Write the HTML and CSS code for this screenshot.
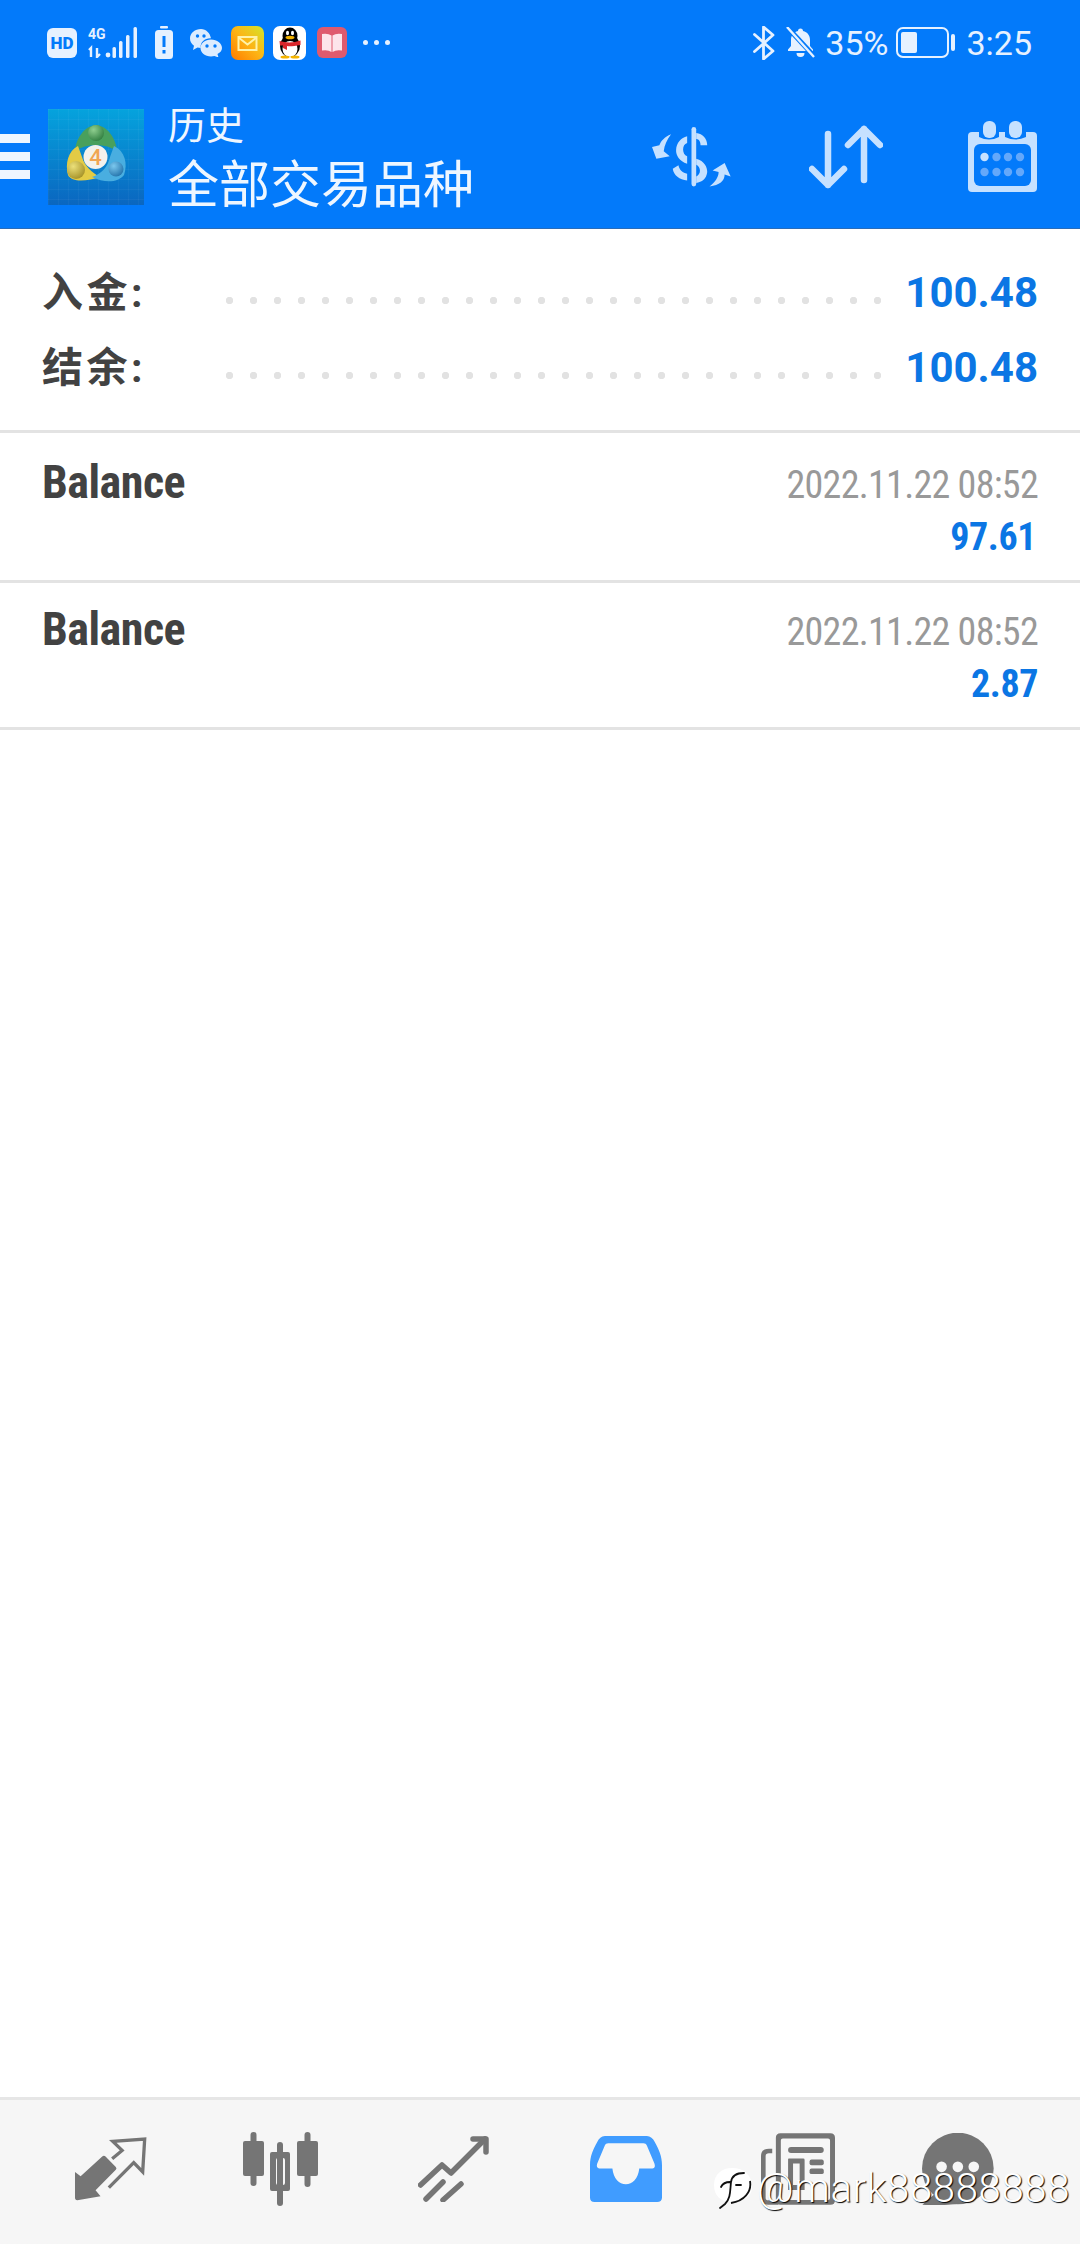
FILE: index.html
```html
<!DOCTYPE html>
<html lang="zh">
<head>
<meta charset="utf-8">
<title>历史</title>
<link rel="stylesheet" href="styles.css">
</head>
<body>
<div class="page">
  <header class="header">
    <div class="status">
      <div class="status-left">
        <span class="hd">HD</span>
        <svg class="st-signal" width="50" height="31" viewBox="0 0 50 31">
          <text x="0" y="12" class="sig-text">4G</text>
          <path d="M3 30V21L1 23M9 21V30L12 27M9 30" fill="none" stroke="#e6f1ff" stroke-width="2.4"/>
          <circle cx="20" cy="28" r="2.4" fill="#e6f1ff"/>
          <rect x="24.500" y="20" width="3.500" height="11" rx="1.500" fill="#e6f1ff"/>
          <rect x="31" y="14" width="3.500" height="17" rx="1.500" fill="#e6f1ff"/>
          <rect x="38" y="8" width="3.500" height="23" rx="1.500" fill="#e6f1ff"/>
          <rect x="45.500" y="0" width="3.500" height="31" rx="1.500" fill="#e6f1ff"/>
        </svg>
        <svg class="st-batt" width="18" height="33" viewBox="0 0 18 33">
          <rect x="5" y="0" width="8" height="2.500" rx="1" fill="#e6f1ff"/>
          <rect x="0" y="4" width="18" height="29" rx="3.500" fill="#e6f1ff"/>
          <rect x="7.500" y="10" width="3" height="11" fill="#037afa"/>
          <rect x="7.500" y="24" width="3" height="3.500" fill="#037afa"/>
        </svg>
        <svg class="st-wechat" width="32" height="28" viewBox="0 0 32 28">
          <path d="M11 0C5 0 0 4 0 9.500c0 3 1.500 5.500 4 7.200L3 21l4.500-2.500c1.200.3 2 .4 3.200.4C10 13 15 9 21 9.300 20 4 16 0 11 0z" fill="#dcecff"/>
          <path d="M21 10.500c-6 0-10.500 3.700-10.500 8.500s4.500 8.500 10.500 8.500c1.300 0 2.300-.2 3.500-.5l4 1.500-1-3.500c2.800-1.500 4.500-3.500 4.500-6 0-4.800-5-8.500-11-8.500z" fill="#dcecff"/>
          <circle cx="17" cy="17" r="1.700" fill="#037afa"/>
          <circle cx="25" cy="17" r="1.700" fill="#037afa"/>
          <circle cx="7.500" cy="7" r="1.700" fill="#037afa"/>
          <circle cx="14" cy="7" r="1.700" fill="#037afa"/>
        </svg>
        <svg class="st-mail" width="33" height="34" viewBox="0 0 33 34">
          <defs>
            <linearGradient id="mailg" x1="0" y1="1" x2="1" y2="0">
              <stop offset="0" stop-color="#ff7a00"/>
              <stop offset=".5" stop-color="#fdb415"/>
              <stop offset="1" stop-color="#d3e62a"/>
            </linearGradient>
          </defs>
          <rect width="33" height="34" rx="7" fill="url(#mailg)"/>
          <rect x="7.500" y="11" width="18" height="13" fill="none" stroke="#fff2a8" stroke-width="2"/>
          <path d="M7.500 11.500L16.500 18.500L25.500 11.500" fill="none" stroke="#fff2a8" stroke-width="2"/>
        </svg>
        <svg class="st-qq" width="33" height="34" viewBox="0 0 33 34">
          <rect width="33" height="34" rx="7" fill="#fff"/>
          <ellipse cx="17" cy="20" rx="10" ry="11" fill="#000"/>
          <ellipse cx="17" cy="10" rx="7.500" ry="8.500" fill="#000"/>
          <ellipse cx="17" cy="23" rx="7.500" ry="8" fill="#fff"/>
          <ellipse cx="14.500" cy="7" rx="1.500" ry="2.200" fill="#fff"/>
          <ellipse cx="19.500" cy="7" rx="1.500" ry="2.200" fill="#fff"/>
          <ellipse cx="17" cy="11.500" rx="4.500" ry="1.800" fill="#f4b400"/>
          <path d="M6.500 15Q17 18 27.500 14.500V19Q17 21 14 20V24L10 22V19.500H7z" fill="#d9262c"/>
          <ellipse cx="12" cy="31" rx="4.500" ry="1.500" fill="#f4b400"/>
          <ellipse cx="22" cy="31" rx="4.500" ry="1.500" fill="#f4b400"/>
        </svg>
        <svg class="st-book" width="30" height="31" viewBox="0 0 30 31">
          <rect width="30" height="31" rx="6" fill="#df5a6e"/>
          <path d="M5 7Q11 6 14.500 8.500V25Q11 22.500 5 23.500zM25 7Q19 6 15.500 8.500V25Q19 22.500 25 23.500z" fill="#fde4ea"/>
        </svg>
        <div class="more"><i></i><i></i><i></i></div>
      </div>
      <div class="status-right">
        <svg width="22" height="34" viewBox="0 0 22 34">
          <path d="M1.500 8.500L20 25L10.500 33V1L20 9L1.500 25.500" fill="none" stroke="#e6f1ff" stroke-width="2.800" stroke-linejoin="round" stroke-linecap="round"/>
        </svg>
        <svg class="st-bell" width="29" height="31" viewBox="0 0 29 31">
          <path d="M14.500 1.500a2.500 2.500 0 0 1 2.500 2.500c4.500 1 7 4.500 7 9v6l3 3.500v1.500H2v-1.500L5 19v-6c0-4.500 2.500-8 7-9a2.500 2.500 0 0 1 2.500-2.500zM10.500 26h8a4 4 0 0 1-8 0z" fill="#e6f1ff"/>
          <path d="M2 1L28 29" stroke="#037afa" stroke-width="5"/>
          <path d="M1 0L28 30" stroke="#e6f1ff" stroke-width="2.400"/>
        </svg>
        <span class="st-text st-pct">35%</span>
        <div class="battery">
          <div class="battery-body"><div class="battery-fill"></div></div>
          <div class="battery-nub"></div>
        </div>
        <span class="st-text st-time">3:25</span>
      </div>
    </div>
    <div class="appbar">
      <div class="burger"><i></i><i></i><i></i></div>
      <svg class="logo" width="96" height="96" viewBox="0 0 96 96">
        <defs>
          <linearGradient id="logobg" x1="0" y1="0" x2="0" y2="1">
            <stop offset="0" stop-color="#05a3dd"/>
            <stop offset="1" stop-color="#0a66c0"/>
          </linearGradient>
          <pattern id="logogrid" width="10" height="10" patternUnits="userSpaceOnUse">
            <path d="M10 0H0V10" fill="none" stroke="#ffffff" stroke-opacity=".07" stroke-width="1"/>
          </pattern>
          <radialGradient id="ballg" cx=".35" cy=".3" r=".8">
            <stop offset="0" stop-color="#8fcf8f"/>
            <stop offset="1" stop-color="#2c7a3c"/>
          </radialGradient>
          <radialGradient id="bally" cx=".35" cy=".3" r=".8">
            <stop offset="0" stop-color="#ece07a"/>
            <stop offset="1" stop-color="#a08c22"/>
          </radialGradient>
          <radialGradient id="ballb" cx=".35" cy=".3" r=".8">
            <stop offset="0" stop-color="#7cc8ee"/>
            <stop offset="1" stop-color="#1f6fa8"/>
          </radialGradient>
        </defs>
        <rect width="96" height="96" fill="url(#logobg)"/>
        <rect width="96" height="96" fill="url(#logogrid)"/>
        <path d="M48 16C36 17 28 30 27 42C33 38 40 36 48 36C56 36 63 38 69 42C68 30 60 17 48 16Z" fill="#49a05c"/>
        <path d="M30 37C20 42 17 55 20 66C24 74 40 72 52 68C44 64 36 56 34 48Z" fill="#e3cb45"/>
        <path d="M66 37C77 42 80 55 76 66C70 74 56 74 44 68C53 65 60 58 62 48Z" fill="#49aee0"/>
        <circle cx="48" cy="24" r="8" fill="url(#ballg)"/>
        <circle cx="28" cy="61" r="9" fill="url(#bally)"/>
        <circle cx="68" cy="60" r="7.500" fill="url(#ballb)"/>
        <circle cx="47.500" cy="48" r="12" fill="#f3f1ec"/>
        <text x="47.500" y="56" text-anchor="middle" class="logo-four">4</text>
      </svg>
      <div class="titles">
        <div class="title-sm">历史</div>
        <div class="title-lg">全部交易品种</div>
      </div>
      <div class="actions">
        <svg class="a-dollar" width="82" height="64" viewBox="30 25 245 190">
          <g fill="#c6e1ff">
            <rect x="151" y="30" width="14" height="178" rx="7"/>
            <path d="M165 48C185 50 198 65 198 85L178 85C178 72 172 66 165 66Z"/>
            <path d="M138 58L138 78C122 82 122 112 138 118L138 140C115 132 104 115 105 98C106 78 120 62 138 58Z"/>
            <path d="M165 125C190 132 198 150 198 165C196 185 182 195 165 198L165 178C180 172 180 150 165 143Z"/>
            <path d="M95 155L112 145C115 160 125 168 138 170L138 190C115 188 98 175 95 155Z"/>
            <path d="M90 52C70 60 60 72 55 85L33 90L46 125L86 118L68 103C70 85 78 68 90 52Z"/>
            <path d="M205 208C235 203 250 192 250 172L268 178L250 138L214 160L232 165C232 180 222 195 205 208Z"/>
          </g>
        </svg>
        <svg class="a-sort" width="74" height="64" viewBox="809 125 74 64">
          <path d="M828 134V185M812 169L828 185L844 169M864 129V180M848 145L864 129L880 145" fill="none" stroke="#c6e1ff" stroke-width="6.500" stroke-linecap="round" stroke-linejoin="round"/>
        </svg>
        <svg class="a-cal" width="69" height="71" viewBox="968 120 69 71">
          <rect x="968" y="131" width="69" height="60" rx="4" fill="#c6e1ff"/>
          <path d="M979 131h20v5q-10 5-20 0zM1005 131h21v5q-10 5-21 0z" fill="#037afa"/>
          <rect x="983" y="120" width="13" height="17" rx="6" fill="#c6e1ff"/>
          <rect x="1009" y="120" width="13" height="17" rx="6" fill="#c6e1ff"/>
          <rect x="974" y="143" width="57" height="42" rx="6" fill="#037afa"/>
          <circle cx="984.500" cy="156" r="4.200" fill="#c6e1ff"/>
          <g fill="#64a8fa">
            <circle cx="996.500" cy="156" r="4.200"/><circle cx="1008" cy="156" r="4.200"/><circle cx="1020" cy="156" r="4.200"/>
            <circle cx="984.500" cy="171" r="4.200"/><circle cx="996.500" cy="171" r="4.200"/><circle cx="1008" cy="171" r="4.200"/><circle cx="1020" cy="171" r="4.200"/>
          </g>
        </svg>
      </div>
    </div>
  </header>

  <main class="main">
    <section class="summary">
      <div class="sum-row">
        <span class="sum-label">入金:</span>
        <span class="dots"></span>
        <span class="sum-value">100.48</span>
      </div>
      <div class="sum-row">
        <span class="sum-label">结余:</span>
        <span class="dots"></span>
        <span class="sum-value">100.48</span>
      </div>
    </section>
    <section class="deal deal-first">
      <div class="deal-name">Balance</div>
      <div class="deal-side">
        <div class="deal-date">2022.11.22 08:52</div>
        <div class="deal-amt amt-a">97.61</div>
      </div>
    </section>
    <section class="deal">
      <div class="deal-name">Balance</div>
      <div class="deal-side">
        <div class="deal-date">2022.11.22 08:52</div>
        <div class="deal-amt">2.87</div>
      </div>
    </section>
  </main>

  <nav class="nav">
    <svg width="73" height="65" viewBox="40 40 220 195">
      <path d="M43 145L60 158L125 98Q130 94 135 98L166 130Q170 135 166 138L105 200L120 218L50 230Q43 230 43 222Z" fill="#757575"/>
      <path d="M155 105L185 80L157 53L253 46L247 145L220 117L145 192" fill="none" stroke="#757575" stroke-width="10"/>
    </svg>
    <svg class="nav-candles" width="75" height="74" viewBox="244 2133 75 74">
      <g fill="#757575">
        <rect x="251.500" y="2133" width="6" height="54" rx="3"/>
        <rect x="244" y="2142" width="21" height="35" rx="2"/>
        <rect x="278" y="2143" width="6" height="64" rx="3"/>
        <path fill-rule="evenodd" d="M273 2153h16a2 2 0 0 1 2 2v35a2 2 0 0 1-2 2h-16a2 2 0 0 1-2-2v-35a2 2 0 0 1 2-2zM279 2159a2 2 0 0 0-2 2v23a2 2 0 0 0 2 2h5a2 2 0 0 0 2-2v-23a2 2 0 0 0-2-2z"/>
        <rect x="305.500" y="2133" width="6" height="55" rx="3"/>
        <rect x="298" y="2142" width="21" height="35" rx="2"/>
      </g>
    </svg>
    <svg class="nav-trend" width="71" height="66" viewBox="418 2136 71 66">
      <g fill="none" stroke="#757575" stroke-width="5.500" stroke-linecap="round" stroke-linejoin="round">
        <path d="M420.500 2185L442 2165L451 2173L485 2139"/>
        <path d="M473 2139H486V2152"/>
        <path d="M443 2182L426 2199"/>
        <path d="M461 2184L443 2200"/>
      </g>
    </svg>
    <svg class="nav-inbox" width="72" height="66" viewBox="147 168 209 197" preserveAspectRatio="none">
      <path fill-rule="evenodd" d="M190 168H312C322 168 330 175 335 186C347 208 356 228 356 255V352C356 360 350 365 342 365H160C152 365 147 360 147 352V255C147 228 156 208 168 186C173 175 180 168 190 168ZM200 190C195 190 192 192 190 196L168 250C165 260 168 265 178 265H212C215 295 232 312 251 312C270 312 287 295 290 265H325C335 265 337 260 334 250L312 196C310 192 307 190 302 190Z" fill="#409cff"/>
    </svg>
    <svg width="74" height="72" viewBox="188 68 224 217">
      <path d="M222 122H212Q195 122 195 137V264Q195 278 210 278H240" fill="none" stroke="#757575" stroke-width="14"/>
      <path fill-rule="evenodd" d="M247 68H398Q412 68 412 82V271Q412 285 398 285H247Q233 285 233 271V82Q233 68 247 68ZM254 84Q248 84 248 90V264Q248 270 254 270H391Q397 270 397 264V90Q397 84 391 84Z" fill="#757575"/>
      <rect x="270" y="110" width="108" height="18" rx="9" fill="#757575"/>
      <rect x="335" y="148" width="43" height="17" rx="6" fill="#757575"/>
      <rect x="335" y="175" width="43" height="17" rx="6" fill="#757575"/>
      <path fill-rule="evenodd" d="M272 145H316Q320 145 320 149V240H270V147Q270 145 272 145ZM285 160V225H305V160Z" fill="#757575"/>
    </svg>
    <svg class="nav-chat" width="72" height="72" viewBox="665 68 217 217">
      <circle cx="773" cy="175" r="108" fill="#757575"/>
      <path d="M705 250L666 284Q720 288 770 282Z" fill="#757575"/>
      <circle cx="724" cy="170" r="16" fill="#f6f6f6"/>
      <circle cx="773" cy="170" r="16" fill="#f6f6f6"/>
      <circle cx="821" cy="170" r="16" fill="#f6f6f6"/>
    </svg>
    <div class="watermark">
      <svg width="38" height="42" viewBox="0 0 38 42">
        <path d="M18 0C30 0 38 7 38 19C38 30 28 33 18 34C7 34 0 28 0 17C0 6 8 0 18 0Z" fill="#fff"/>
        <path d="M30 5C24 5 18 7 17 14C16 22 17 30 11 36L6 40M7 19C9 15 12 14 16 14M22 17H27" fill="none" stroke="#111" stroke-width="1.800" stroke-linecap="round"/>
        <path d="M36 13C38 24 30 33 17 35" fill="none" stroke="#111" stroke-width="1.800"/>
      </svg>
      <span class="wm-text">@mark88888888</span>
    </div>
  </nav>
</div>
</body>
</html>
```

FILE: styles.css
```css
* { box-sizing: border-box; }
html, body { margin: 0; padding: 0; background: #fff; }
.page {
  position: relative;
  width: 1080px;
  height: 2244px;
  display: flex;
  flex-direction: column;
  font-family: Roboto, "Noto Sans CJK SC", sans-serif;
  overflow: hidden;
}
svg { display: block; flex: none; }

/* header */
.header {
  height: 229px;
  background: #037afa;
  border-bottom: 1px solid #2a6cb8;
  flex: none;
}
.status {
  height: 85px;
  display: flex;
  align-items: center;
  justify-content: space-between;
  padding: 0 48px 0 47px;
}
.status-left, .status-right { display: flex; align-items: center; }
.hd {
  width: 30px;
  height: 30px;
  border-radius: 6px;
  background: #e6f1ff;
  color: #037afa;
  font-size: 17px;
  font-weight: 900;
  line-height: 30px;
  text-align: center;
}
.sig-text { font-family: Roboto, sans-serif; font-size: 14px; font-weight: 700; fill: #e6f1ff; }
.st-signal { margin-left: 11px; }
.st-batt { margin-left: 17px; }
.st-wechat { margin-left: 17px; }
.st-mail { margin-left: 9px; }
.st-qq { margin-left: 9px; }
.st-book { margin-left: 11px; }
.more { display: flex; gap: 6px; margin-left: 16px; }
.more i { width: 5px; height: 5px; border-radius: 50%; background: #e6f1ff; }
.st-bell { margin-left: 11px; }
.st-text { color: #e6f1ff; font-size: 34px; font-weight: 400; line-height: 40px; }
.st-pct { margin-left: 10px; }
.st-time { margin-left: 11px; }
.battery { display: flex; align-items: center; margin-left: 8px; }
.battery-body {
  width: 53px;
  height: 31px;
  border: 2.5px solid #e6f1ff;
  border-radius: 7px;
  padding: 3px;
}
.battery-fill { width: 16px; height: 100%; background: #e6f1ff; border-radius: 2px; }
.battery-nub { width: 4px; height: 17px; margin-left: 2px; border-radius: 2px; background: #e6f1ff; }

.appbar {
  height: 143px;
  display: flex;
  align-items: center;
  position: relative;
}
.burger { width: 30px; display: flex; flex-direction: column; gap: 9px; }
.burger i { display: block; height: 9px; background: #eef6ff; }
.logo { margin-left: 18px; }
.titles { margin-left: 24px; padding-top: 8px; color: #eef6ff; flex: none; }
.title-sm { font-size: 38px; line-height: 50px; margin-top: -4px; margin-bottom: 5px; }
.title-lg { font-size: 51px; line-height: 60px; }
.logo-four { font-family: Roboto, sans-serif; font-size: 22px; font-weight: 500; fill: #f0a552; }
.actions { margin-left: auto; display: flex; align-items: center; padding-right: 43px; }
.a-sort { margin-left: 76px; }
.a-cal { margin-left: 85px; }

/* summary */
.main { flex: 1; }
.summary {
  padding: 26px 42px 25px 42px;
  border-bottom: 3px solid #e3e3e3;
  height: 204px;
}
.sum-row { display: flex; height: 75px; align-items: center; }
.sum-label { width: 184px; padding-top: 2px; font-size: 41px; font-weight: 700; color: #424242; line-height: 75px; letter-spacing: 3.5px; flex: none; }
.dots {
  width: 655px;
  height: 7px;
  margin-top: 16px;
  flex: none;
  background-image: radial-gradient(circle at 3.5px 3.5px, #e2e2e2 3.4px, transparent 4px);
  background-size: 24px 7px;
  background-repeat: repeat-x;
}
.sum-value { margin-left: auto; font-size: 42px; font-weight: 700; color: #0b76e4; line-height: 75px; }

/* deals */
.deal {
  display: flex;
  justify-content: space-between;
  align-items: baseline;
  padding: 23px 42px 17px 42px;
  border-bottom: 3px solid #e3e3e3;
}
.deal-first { padding-top: 26px; }
.deal-name { font-size: 46px; line-height: 46px; font-weight: 700; color: #424242; font-stretch: 75%; letter-spacing: -.5px; }
.deal-side { text-align: right; }
.deal-date { font-size: 38px; line-height: 52px; color: #999; font-stretch: 75%; letter-spacing: -.7px; }
.deal-amt { font-size: 38px; line-height: 52px; font-weight: 700; color: #0b76e4; font-stretch: 75%; letter-spacing: -.4px; }
.amt-a { padding-right: 2px; }

/* bottom nav */
.nav {
  flex: none;
  height: 147px;
  background: #f6f6f6;
  border-top: 3px solid #e6e6e6;
  display: flex;
  align-items: center;
  gap: 99px;
  padding: 0 0 6px 74px;
  position: relative;
}
.nav-candles { margin-left: -3px; }
.nav-trend { margin-left: 1px; }
.nav-inbox { margin-left: 2px; }
.nav-chat { margin-left: -12px; }
.watermark {
  position: absolute;
  left: 714px;
  top: 66px;
  display: flex;
  align-items: center;
  gap: 5px;
}
.wm-text {
  font-size: 40px;
  font-weight: 300;
  line-height: 46px;
  letter-spacing: .7px;
  color: #fff;
  text-shadow: 1px 1px 1px #000;
}
```
